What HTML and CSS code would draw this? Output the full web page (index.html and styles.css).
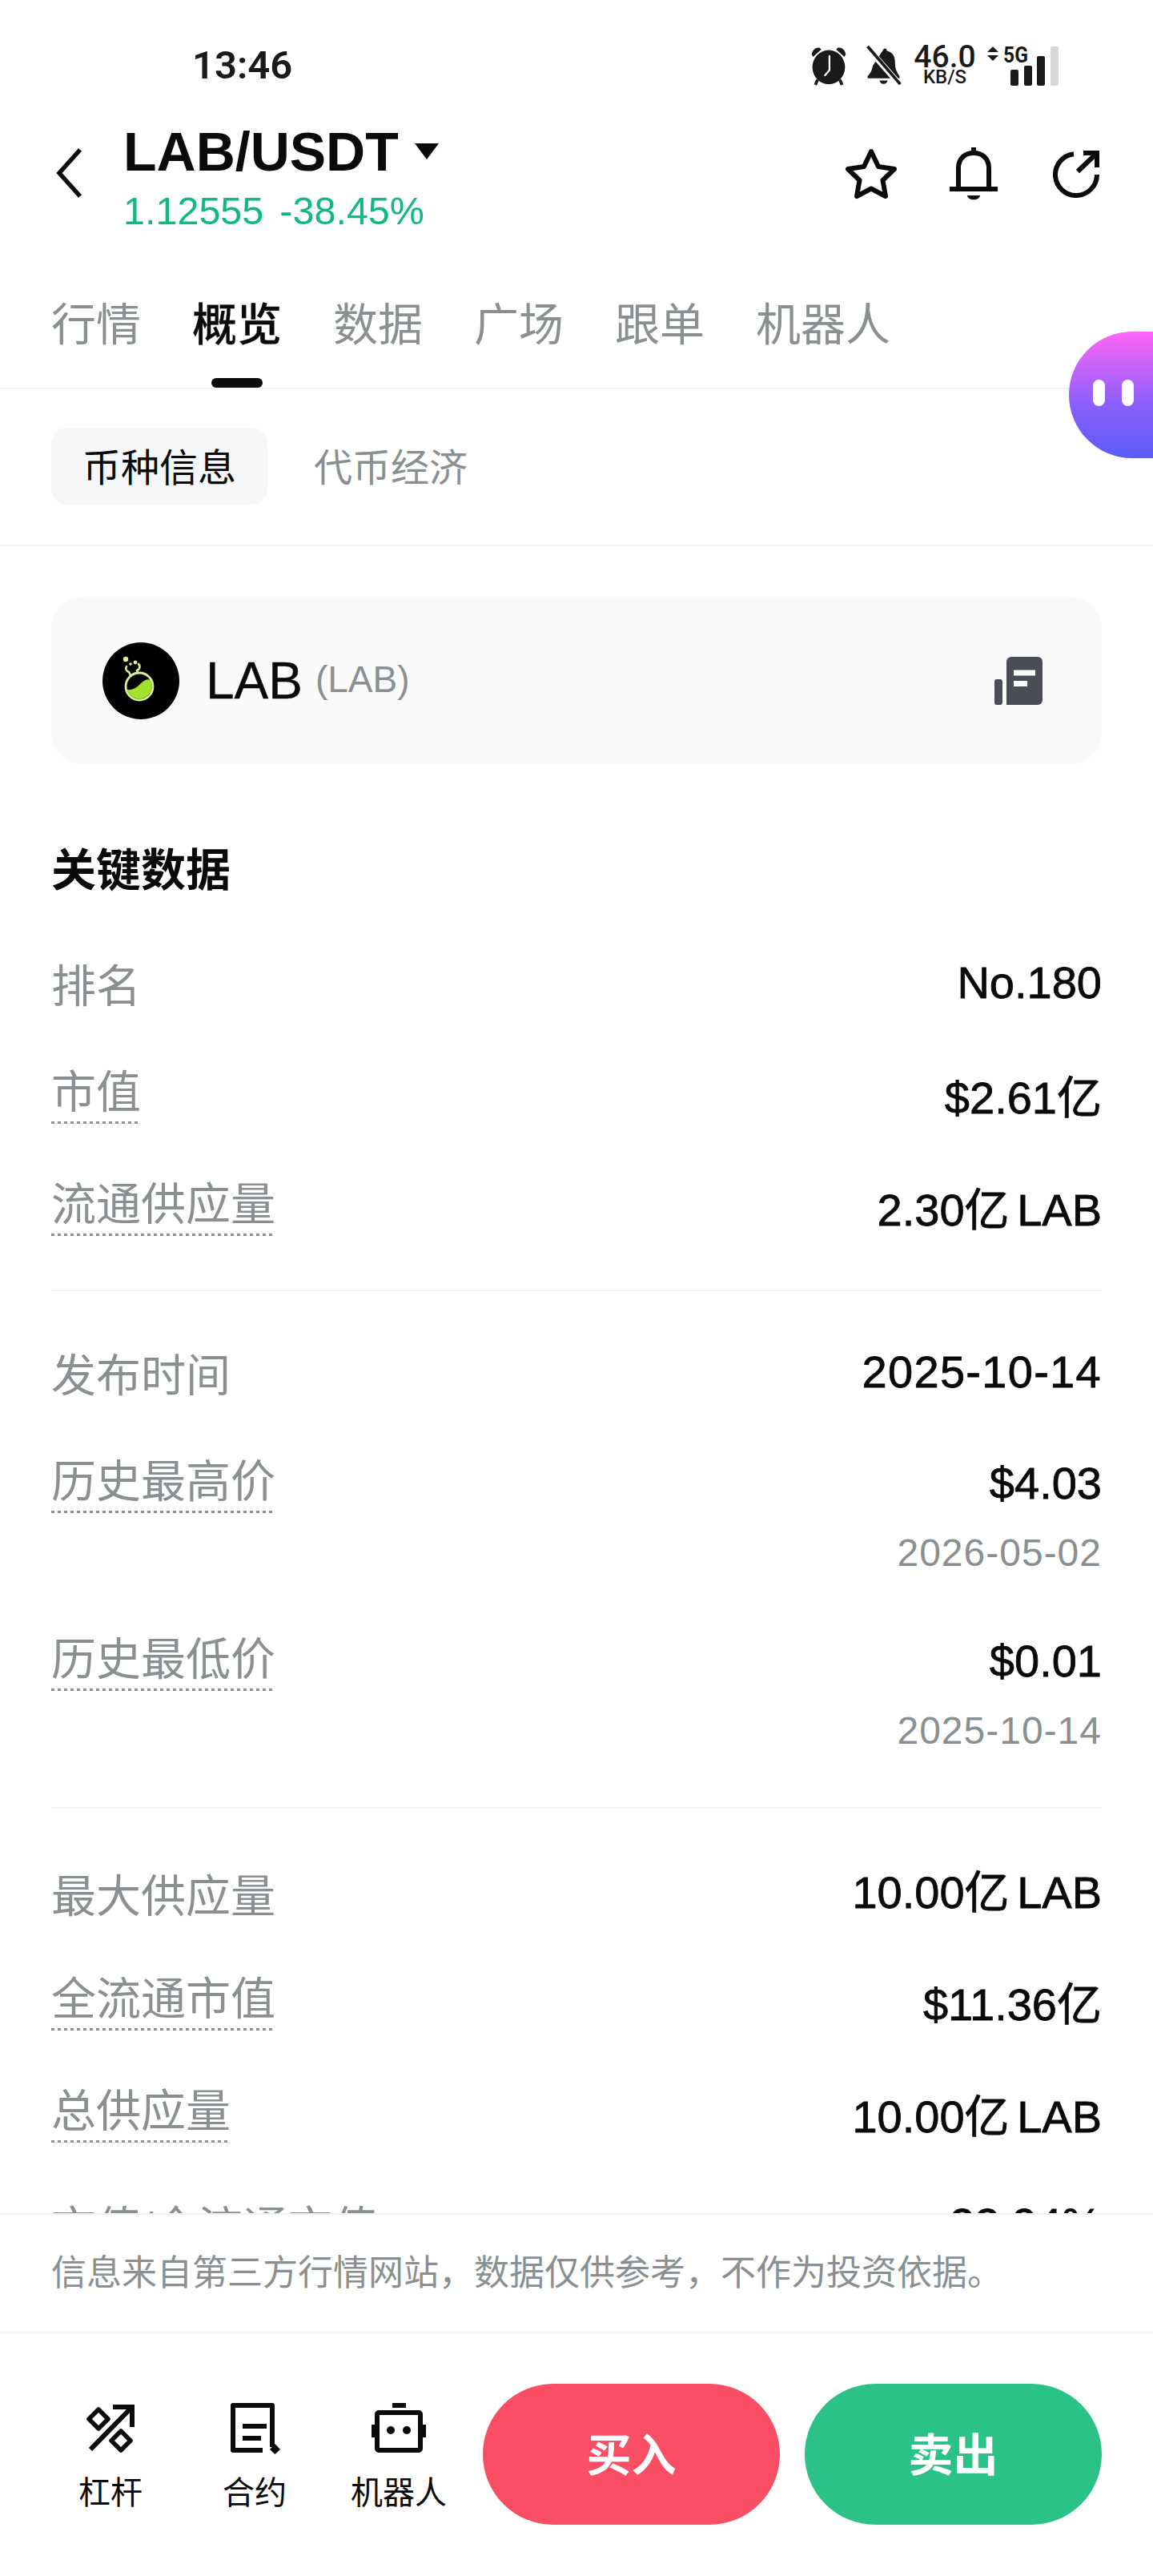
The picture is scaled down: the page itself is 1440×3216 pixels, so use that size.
FILE: index.html
```html
<!DOCTYPE html>
<html lang="zh-CN">
<head>
<meta charset="utf-8">
<title>LAB/USDT</title>
<link rel="stylesheet" href="styles.css">
</head>
<body>
<div class="page">
  <div class="status">
    <span class="time">13:46</span>
    <div class="status-icons">
      <svg class="st-alarm" viewBox="0 0 52 54" width="50" height="50"><path d="M3 12C4 5 9 2 14 3L16 5 5 15ZM49 12C48 5 43 2 38 3L36 5 47 15Z" fill="#1a1a1a"/><ellipse cx="26" cy="29" rx="22" ry="23" fill="#1a1a1a"/><path d="M11 46L8 53M41 46L44 53" stroke="#1a1a1a" stroke-width="4"/><path d="M27 14V33L21 40" stroke="#fff" stroke-width="2.4" fill="none" stroke-linecap="round"/></svg>
      <svg class="st-mute" viewBox="0 0 50 54" width="48" height="50"><path d="M25 4a3 3 0 0 1 4 3c9 2 11 9 11 17 0 7 2 12 6 17v3H3v-3c4-4 6-8 7-14Z" fill="#1a1a1a"/><path d="M19 47h11c-1 6-10 6-11 0Z" fill="#1a1a1a"/><path d="M2 2L46 52" stroke="#fff" stroke-width="8"/><path d="M3 1L47 52" stroke="#1a1a1a" stroke-width="4"/></svg>
      <div class="speed"><span class="speed-n">46.0</span><span class="speed-u">KB/S</span></div>
      <svg class="st-arrows" viewBox="0 0 14 18" width="14" height="18"><path d="M7 0L14 7H0ZM7 18L0 11H14Z" fill="#1a1a1a"/></svg>
      <div class="signal">
        <span class="net">5G</span>
        <div class="bars"><i class="bar b1"></i><i class="bar b2"></i><i class="bar b3"></i><i class="bar b4"></i></div>
      </div>
    </div>
  </div>

  <header class="head">
    <svg class="back" viewBox="0 0 36 64" width="36" height="64"><path d="M32 3L6 32L32 61" fill="none" stroke="#0a0a0a" stroke-width="5.5"/></svg>
    <div class="pair">
      <div class="pair-name"><span>LAB/USDT</span><i class="caret"></i></div>
      <div class="pair-price"><span>1.12555</span><span>-38.45%</span></div>
    </div>
    <div class="head-actions">
      <svg viewBox="0 0 66 66" width="66" height="66"><path d="M33 5L42 24 62 27 47.5 41 51 61 33 51.5 15 61 18.5 41 4 27 24 24Z" fill="none" stroke="#0a0a0a" stroke-width="6" stroke-linejoin="round"/></svg>
      <svg viewBox="0 0 60 66" width="60" height="66"><path d="M0 52H60" stroke="#0a0a0a" stroke-width="6"/><path d="M11 50V26C11 14 19 7 30 7S49 14 49 26V50" fill="none" stroke="#0a0a0a" stroke-width="6"/><path d="M27 0H33V8H27Z" fill="#0a0a0a"/><path d="M22 60H38C37 67 23 67 22 60Z" fill="#0a0a0a"/></svg>
      <svg class="act-share" viewBox="0 0 58 60" width="58" height="60"><path d="M26 5.2A26 26 0 1 0 55 31" fill="none" stroke="#0a0a0a" stroke-width="6"/><path d="M31 27L54 5M38 4H55V22" fill="none" stroke="#0a0a0a" stroke-width="6"/></svg>
    </div>
  </header>

  <nav class="tabs">
    <span class="tab">行情</span>
    <span class="tab tab-on">概览</span>
    <span class="tab">数据</span>
    <span class="tab">广场</span>
    <span class="tab">跟单</span>
    <span class="tab">机器人</span>
  </nav>

  <div class="subtabs">
    <span class="sub sub-on">币种信息</span>
    <span class="sub">代币经济</span>
  </div>

  <main class="scroll">
    <section class="coin">
      <svg class="coin-logo" viewBox="0 0 96 96" width="96" height="96">
        <circle cx="48" cy="48" r="48" fill="#000"/>
        <circle cx="29" cy="21" r="3.2" fill="#d8ee9a"/>
        <circle cx="35" cy="27" r="1.8" fill="#d8ee9a"/>
        <circle cx="41" cy="25" r="2.4" fill="#d8ee9a"/>
        <path d="M30 30c-2 3 0 6 3 7l2 4M45 27c3 3 1 7-2 8l1 3" fill="none" stroke="#d8ee9a" stroke-width="2.6" stroke-linecap="round"/>
        <circle cx="46" cy="55" r="17" fill="none" stroke="#d8ee9a" stroke-width="2.8"/>
        <path d="M30.5 59C38 60 43 56 47 52C51 48 55 45 60 47A16 16 0 1 1 30.5 59Z" fill="#a2e22c"/>
      </svg>
      <span class="coin-name">LAB</span>
      <span class="coin-sym">(LAB)</span>
      <svg class="coin-doc" viewBox="0 0 60 60" width="60" height="60">
        <path d="M15 6a6 6 0 0 1 6-6H54a6 6 0 0 1 6 6V54a6 6 0 0 1-6 6H15Z" fill="#4a4d55"/>
        <rect x="0" y="28" width="10" height="32" rx="3" fill="#4a4d55"/>
        <path d="M24 20H51M24 33.500H41" stroke="#fafafb" stroke-width="7"/>
      </svg>
    </section>

    <h2 class="section-title">关键数据</h2>

    <div class="group">
      <div class="row row-first"><span class="label">排名</span><span class="value">No.180</span></div>
      <div class="row"><span class="label dot">市值</span><span class="value">$2.61亿</span></div>
      <div class="row"><span class="label dot">流通供应量</span><span class="value">2.30亿 LAB</span></div>
    </div>
    <div class="group">
      <div class="row"><span class="label">发布时间</span><span class="value value-date">2025-10-14</span></div>
      <div class="row row-tall"><span class="label dot">历史最高价</span><div class="value-box"><span class="value">$4.03</span><span class="date">2026-05-02</span></div></div>
      <div class="row row-tall"><span class="label dot">历史最低价</span><div class="value-box"><span class="value">$0.01</span><span class="date">2025-10-14</span></div></div>
    </div>
    <div class="group group-last">
      <div class="row"><span class="label">最大供应量</span><span class="value">10.00亿 LAB</span></div>
      <div class="row"><span class="label dot">全流通市值</span><span class="value">$11.36亿</span></div>
      <div class="row"><span class="label dot">总供应量</span><span class="value">10.00亿 LAB</span></div>
      <div class="row row-clip"><span class="label">市值/全流通市值</span><span class="value">22.94%</span></div>
    </div>
  </main>

  <p class="notice">信息来自第三方行情网站，数据仅供参考，不作为投资依据。</p>

  <footer class="actions">
    <div class="act">
      <svg viewBox="0 0 60 64" width="60" height="64"><path d="M5 58L55 7M33 5H57V30" fill="none" stroke="#0a0a0a" stroke-width="6"/><path d="M15 8L27 20 15 32 3 20ZM43 35L55 47 43 59 31 47Z" fill="none" stroke="#0a0a0a" stroke-width="5.500" stroke-linejoin="round"/></svg>
      <span>杠杆</span>
    </div>
    <div class="act">
      <svg viewBox="-3 0 66 64" width="66" height="64"><path d="M40 59H3V3H52V55" fill="none" stroke="#0a0a0a" stroke-width="6" stroke-linejoin="round"/><path d="M15 29H45M15 44H38" stroke="#0a0a0a" stroke-width="6"/><path d="M55.500 51L62 58 55.500 64 49 58Z" fill="#0a0a0a"/></svg>
      <span>合约</span>
    </div>
    <div class="act act-last">
      <svg viewBox="0 0 68 64" width="68" height="64"><path d="M26 0H43V6H26Z" fill="#0a0a0a"/><rect x="7" y="12" width="54" height="47" rx="2" fill="none" stroke="#0a0a0a" stroke-width="6"/><path d="M0 27H4V43H0ZM64 27H68V43H64Z" fill="#0a0a0a"/><circle cx="24" cy="34" r="5" fill="#0a0a0a"/><circle cx="44" cy="34" r="5" fill="#0a0a0a"/></svg>
      <span>机器人</span>
    </div>
    <div class="btn btn-buy">买入</div>
    <div class="btn btn-sell">卖出</div>
  </footer>

  <div class="bubble"><i class="eye"></i><i class="eye"></i></div>
</div>
</body>
</html>
```

FILE: styles.css
```css
* { box-sizing: border-box; }
html, body { margin: 0; padding: 0; background: #fff; }
body {
  font-family: "Liberation Sans", "Noto Sans CJK SC", sans-serif;
  color: #0a0a0a;
}
.page {
  position: relative;
  width: 1440px;
  height: 3216px;
  overflow: hidden;
  display: flex;
  flex-direction: column;
  background: #fff;
}

/* status bar */
.status {
  height: 138px;
  padding: 50px 117px 0 240px;
  display: flex;
  justify-content: space-between;
  align-items: flex-start;
  flex: none;
}
.time {
  font-family: Roboto, "Liberation Sans", sans-serif;
  font-weight: 600;
  font-size: 49px;
  line-height: 64px;
  color: #1a1a1a;
}
.status-icons { display: flex; align-items: flex-start; height: 50px; margin-top: 7px; }
.st-mute { margin-left: 20px; }
.speed { display: flex; flex-direction: column; align-items: center; margin-left: 12px; width: 80px; color: #1a1a1a; }
.speed-n { font: 500 39px/29px Roboto, sans-serif; }
.speed-u { font: 500 24px/21px Roboto, sans-serif; }
.st-arrows { margin: 1px 0 0 13px; }
.signal { display: grid; width: 70px; height: 50px; margin-left: 6px; }
.net {
  grid-area: 1 / 1;
  font: 700 28px/24px Roboto, sans-serif;
  color: #1a1a1a;
  transform: scaleX(.88);
  transform-origin: left;
}
.bars { grid-area: 1 / 1; display: flex; align-items: flex-end; gap: 6.500px; padding-left: 9px; }
.bar { display: block; width: 10px; border-radius: 2px; background: #1a1a1a; }
.b1 { height: 20px; }
.b2 { height: 25px; }
.b3 { height: 37px; }
.b4 { height: 49px; background: #d7d7d7; }

/* header */
.head {
  height: 148px;
  padding: 0 67px 0 68px;
  display: flex;
  align-items: flex-start;
  flex: none;
}
.back { margin-top: 46px; flex: none; }
.pair { margin: 12px 0 0 50px; flex: 1; }
.pair-name { display: flex; align-items: center; font-weight: 700; font-size: 68px; line-height: 78px; }
.caret { width: 0; height: 0; margin-left: 20px; border-left: 15px solid transparent; border-right: 15px solid transparent; border-top: 20px solid #0a0a0a; }
.pair-price { display: flex; gap: 20px; font-size: 48.500px; line-height: 58px; color: #10b981; margin-top: 6px; }
.head-actions { display: flex; align-items: center; gap: 65px; margin-top: 46px; }
.act-share { margin-left: 4px; }

/* tabs */
.tabs {
  height: 200px;
  padding: 88px 64px 0;
  display: flex;
  gap: 64px;
  border-bottom: 2px solid #f0f1f2;
  flex: none;
  font-size: 56px;
  line-height: 64px;
  color: #8a8f91;
}
.tab { position: relative; height: 110px; }
.tab-on { color: #0a0a0a; font-weight: 500; -webkit-text-stroke: .3px #0a0a0a; }
.tab-on::after {
  content: "";
  position: absolute;
  left: 24px;
  bottom: 0;
  width: 64px;
  height: 12px;
  border-radius: 6px;
  background: #0a0a0a;
}

/* sub tabs */
.subtabs {
  height: 196px;
  padding: 48px 64px 0;
  display: flex;
  align-items: flex-start;
  gap: 58px;
  border-bottom: 2px solid #f0f1f2;
  flex: none;
}
.sub {
  height: 96px;
  font-size: 48px;
  line-height: 102px;
  color: #8a8f91;
}
.sub-on {
  padding: 0 39px;
  border-radius: 20px;
  background: #f5f6f7;
  color: #0a0a0a;
}

/* scrolling body */
.scroll { flex: 1; min-height: 0; overflow: hidden; padding: 63px 64px 0; }
.coin {
  height: 209px;
  border-radius: 40px;
  background: #fafafb;
  padding: 0 74px 0 64px;
  display: flex;
  align-items: center;
}
.coin-name { margin-left: 33px; font-size: 64px; -webkit-text-stroke: .4px #0a0a0a; }
.coin-sym { margin-left: 16px; margin-bottom: 4px; font-size: 46px; color: #8a8f91; flex: 1; }
.section-title { margin: 99px 0 5px; font-size: 56px; line-height: 68px; font-weight: 700; }
.group { padding: 31px 0 29px; border-bottom: 2px solid #f0f1f2; }
.group-last { padding-top: 35px; border-bottom: 0; }
.row {
  height: 140px;
  display: flex;
  justify-content: space-between;
  align-items: center;
}
.row-first { margin-bottom: 4px; }
.row-tall { height: 222px; align-items: flex-start; padding-top: 34px; }
.row-clip { margin-top: -6px; }
.label { font-size: 56px; line-height: 70px; color: #8a8f91; margin-top: 10px; }
.dot {
  margin: 0 0 10px;
  padding-bottom: 4px;
  background: repeating-linear-gradient(90deg, #8a8f91 0 4px, transparent 4px 8px) left bottom / 100% 3px no-repeat;
}
.row-tall .dot { margin: -2px 0 0; }
.value { font-size: 56px; line-height: 70px; color: #0a0a0a; -webkit-text-stroke: .8px #0a0a0a; word-spacing: -6px; }
.value-date { letter-spacing: 1.300px; }
.value-box { display: flex; flex-direction: column; align-items: flex-end; }
.date { font-size: 48px; line-height: 60px; margin-top: 22px; letter-spacing: 1px; color: #8a8f91; }

/* notice + footer */
.notice {
  margin: 0;
  height: 150px;
  flex: none;
  padding: 0 64px;
  font-size: 44px;
  line-height: 146px;
  color: #8a8f91;
  background: #fff;
  border-top: 2px solid #f0f1f2;
  border-bottom: 2px solid #f0f1f2;
}
.actions {
  height: 303px;
  flex: none;
  padding: 63px 64px 0 48px;
  display: flex;
  align-items: flex-start;
}
.act {
  width: 180px;
  display: flex;
  flex-direction: column;
  align-items: center;
  font-size: 40px;
  line-height: 48px;
  padding-top: 24px;
}
.act svg { display: block; margin-bottom: 24px; }
.act-last { margin-right: 15px; }
.btn {
  width: 371px;
  height: 176px;
  border-radius: 88px;
  color: #fff;
  font-size: 56px;
  font-weight: 700;
  line-height: 180px;
  text-align: center;
}
.btn-buy { background: #f94e63; margin-right: 31px; }
.btn-sell { background: #2bc287; }

/* floating assistant */
.bubble {
  position: absolute;
  left: 1335px;
  top: 414px;
  width: 105px;
  height: 158px;
  border-radius: 79px 0 0 79px;
  background: linear-gradient(180deg, #ff66f7 0%, #8f5ffb 55%, #5a5cfb 100%);
  display: flex;
  gap: 21px;
  align-items: center;
  padding: 0 0 6px 30px;
}
.eye { display: block; width: 15px; height: 33px; border-radius: 8px; background: #fff; }
```
